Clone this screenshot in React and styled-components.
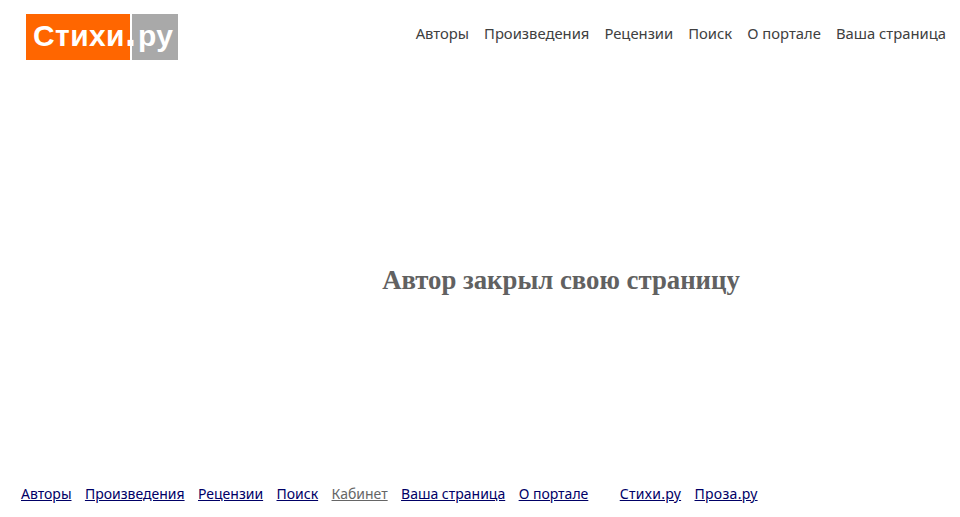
import styled, { createGlobalStyle } from 'styled-components'

const GlobalStyle = createGlobalStyle`
  html, body { margin: 0; padding: 0; background: #fff; }
`

const Page = styled.div`
  width: 960px;
  height: 517px;
  display: flex;
  flex-direction: column;
  overflow: hidden;
`

const Header = styled.header`
  height: 60px;
  padding: 14px 14px 0 26px;
  display: flex;
  justify-content: space-between;
  align-items: flex-start;
`

const Logo = styled.div`
  display: flex;
  height: 46px;
  font-family: "Liberation Sans", Arial, sans-serif;
  font-weight: bold;
  font-size: 30px;
  letter-spacing: 0.4px;
  line-height: 44px;
  color: #fff;
`

const LogoOrange = styled.span`
  position: relative;
  z-index: 1;
  width: 104px;
  background: #ff6600;
  padding-left: 7px;
  box-sizing: border-box;
  white-space: nowrap;
`

const LogoDot = styled.span`
  font-size: 40px;
  line-height: 0;
  letter-spacing: 0;
`

const LogoGray = styled.span`
  width: 46px;
  margin-left: 2px;
  padding-left: 6px;
  box-sizing: border-box;
  background: #a9a9a9;
  white-space: nowrap;
`

const TopNav = styled.nav`
  display: flex;
  gap: 15px;
  padding-top: 10px;
  font-family: "Noto Sans", Tahoma, sans-serif;
  font-size: 14.8px;
  line-height: 19px;
`

const TopLink = styled.a`
  color: #404040;
  text-decoration: none;
`

const Main = styled.main`
  flex: 1;
  padding-left: 162px;
  display: flex;
  justify-content: center;
  align-items: center;
`

const Title = styled.h1`
  margin: 3px 0 0;
  font-family: "Liberation Serif", "Times New Roman", serif;
  font-size: 26.75px;
  font-weight: bold;
  color: #616161;
`

const Footer = styled.footer`
  height: 33px;
  padding-left: 21px;
  display: flex;
  gap: 13.4px;
  font-family: "Noto Sans", Tahoma, sans-serif;
  font-size: 14px;
  line-height: 19px;
`

const FootLink = styled.a`
  color: ${({ $muted }) => ($muted ? '#666666' : '#000066')};
  text-decoration: underline;
  letter-spacing: ${({ $wide }) => ($wide ? '0.3px' : 'normal')};
  margin-left: ${({ $push }) => ($push ? '18px' : '0')};
`

const topItems = ['Авторы', 'Произведения', 'Рецензии', 'Поиск', 'О портале', 'Ваша страница']

const App = () => (
  <Page>
    <GlobalStyle />
    <Header>
      <Logo>
        <LogoOrange>Стихи<LogoDot>.</LogoDot></LogoOrange>
        <LogoGray>ру</LogoGray>
      </Logo>
      <TopNav>
        {topItems.map((item) => (
          <TopLink key={item} href="#">{item}</TopLink>
        ))}
      </TopNav>
    </Header>
    <Main>
      <Title>Автор закрыл свою страницу</Title>
    </Main>
    <Footer>
      <FootLink href="#">Авторы</FootLink>
      <FootLink href="#">Произведения</FootLink>
      <FootLink href="#">Рецензии</FootLink>
      <FootLink href="#">Поиск</FootLink>
      <FootLink href="#" $muted>Кабинет</FootLink>
      <FootLink href="#">Ваша страница</FootLink>
      <FootLink href="#">О портале</FootLink>
      <FootLink href="#" $push $wide>Стихи.ру</FootLink>
      <FootLink href="#" $wide>Проза.ру</FootLink>
    </Footer>
  </Page>
)

export default App
